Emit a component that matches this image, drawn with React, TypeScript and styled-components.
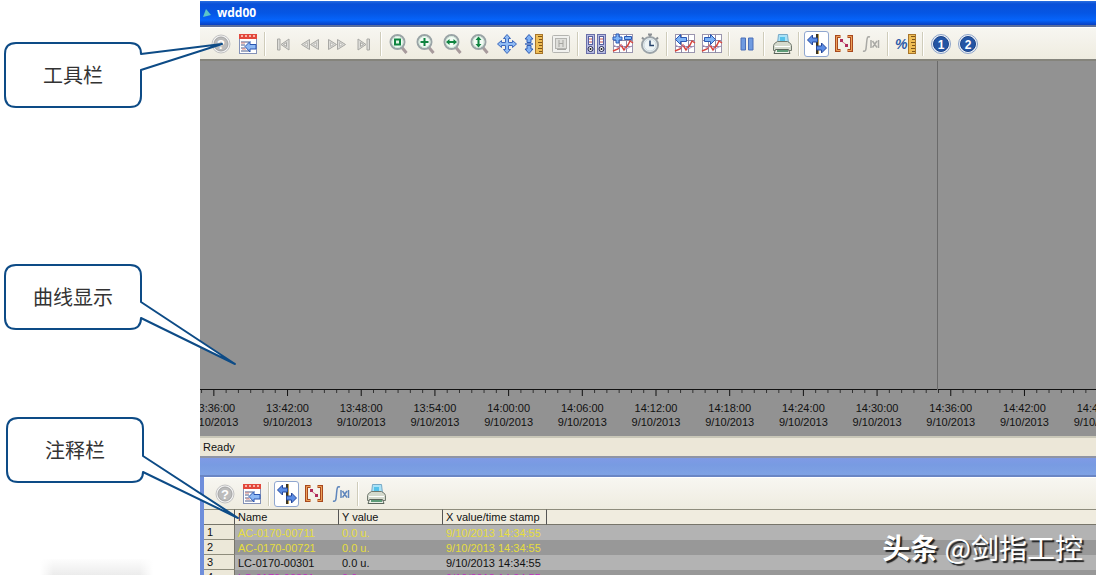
import React from "react";
import styled, { createGlobalStyle, css } from "styled-components";

const GlobalStyle = createGlobalStyle`
  *, *::before, *::after { box-sizing: border-box; }
  body {
    margin: 0;
    background: #fff;
    color: #111;
    font-family: "Liberation Sans", Arial, sans-serif;
    font-size: 11px;
    line-height: 14px;
  }
`;

/* ---------- page frame ---------- */

const Page = styled.div`
  position: relative;
  display: flex;
  min-height: 100vh;
  padding: 1px 6px 6px 0;
  overflow: hidden;
`;

const NotesColumn = styled.aside`
  flex: 0 0 200px;
  display: flex;
  align-items: flex-end;
  padding-left: 40px;
`;

const SoftPatch = styled.div`
  width: 113px;
  height: 16px;
  background: linear-gradient(90deg, #fff 0, transparent 12%, transparent 88%, #fff 100%),
    linear-gradient(#fdfdfd, #ececec);
`;

const AppWindow = styled.main`
  position: relative;
  flex: 1;
  min-width: 0;
  display: flex;
  flex-direction: column;
`;

const TitleBar = styled.header`
  flex: 0 0 26px;
  display: flex;
  align-items: center;
  gap: 6px;
  padding-left: 2px;
  border-bottom: 2px solid #5c6f9c;
  background: linear-gradient(#2a6fe0 0, #0a50d8 12%, #0556e4 50%, #0664fb 80%, #0a3fc0 100%);
`;

const Title = styled.h1`
  margin: 0;
  color: #fff;
  font: bold 12px/16px "Open Sans", sans-serif;
`;

const Toolbar = styled.div`
  flex: none;
  height: 32px;
  display: flex;
  align-items: center;
  padding-left: 7px;
  border-top: 1px solid #fff;
  background: linear-gradient(#f7f6f1, #efece0);
`;

const ToolButton = styled.button<{ $pressed?: boolean }>`
  flex: 0 0 25px;
  height: 26px;
  margin: 0 1px;
  padding: 0;
  display: flex;
  align-items: center;
  justify-content: center;
  border: 1px solid transparent;
  border-radius: 3px;
  background: none;
  ${(p) =>
    p.$pressed &&
    css`
      border-color: #8fa6cf;
      background: #fff;
    `}
  svg { flex: none; display: block; }
`;

const Separator = styled.span`
  flex: 0 0 8px;
  height: 24px;
  background: linear-gradient(90deg, transparent 3px, #cfccba 3px, #cfccba 4px, #fff 4px, #fff 5px, transparent 5px);
`;

/* ---------- trend area ---------- */

const Trend = styled.section`
  position: relative;
  flex: 1 0 300px;
  display: flex;
  flex-direction: column;
  overflow: hidden;
  border-top: 2px solid #85847c;
  background: #929292;
`;

const Plot = styled.div`
  flex: 1;
  border-bottom: 1px solid #111;
`;

const Cursor = styled.div`
  position: absolute;
  top: 0;
  bottom: 46px;
  right: 158px;
  width: 1px;
  background: #6a6a6a;
`;

const Axis = styled.div`
  margin: 0 -39px 0 -23px;
  height: 46px;
`;

const Ticks = styled.svg`
  display: block;
  width: 100%;
  height: 11px;
`;

const AxisLabels = styled.div`
  display: grid;
  grid-template-columns: repeat(13, 1fr);
  text-align: center;
  white-space: nowrap;
`;

const StatusBar = styled.footer`
  flex: 0 0 22px;
  padding: 0 3px;
  border-top: 2px solid #c9c7b8;
  border-bottom: 2px solid #8f94a4;
  background: #ece7d8;
  line-height: 18px;
`;

const PaneCaption = styled.div`
  flex: 0 0 19px;
  border-bottom: 2px solid #6a86c4;
  background: linear-gradient(#7f9ae6, #789be2 40%, #7fa2e4);
`;

const NotePane = styled.section`
  border-left: 4px solid #6f8edb;
`;

const TableView = styled.div`
  height: 66px;
  overflow: hidden;
`;

const Table = styled.table`
  width: 100%;
  table-layout: fixed;
  border-collapse: separate;
  border-spacing: 0;
  white-space: nowrap;
  th, td { height: 15px; padding: 0 0 0 3px; text-align: left; font-weight: normal; line-height: 14px; }
  thead th { height: 16px; border-top: 1px solid #8e8c7c; border-bottom: 1px solid #77756a; background: #f0ecdf; }
  thead th:not(:last-child) { border-right: 1px solid #555; }
  tbody th { border-right: 1px solid #77756a; border-bottom: 1px solid #8e8c7c; background: #ece8d9; }
`;

const Row = styled.tr<{ $ink: string }>`
  color: ${(p) => p.$ink};
  background: #b3b3b3;
  &:nth-child(even) { background: #989898; }
  th { color: #111; }
`;

const Col = styled.col<{ $w?: number }>`
  width: ${(p) => (p.$w ? p.$w + "px" : "auto")};
`;

const Watermark = styled.div`
  position: absolute;
  right: 13px;
  bottom: 8px;
  color: #fff;
  font: 28px/40px "Noto Sans CJK SC", sans-serif;
  text-shadow: 2px 2px 1px #222;
  white-space: nowrap;
  b { font-weight: 700; }
`;

/* ---------- callouts ---------- */

const CalloutBox = styled.div<{ $top: number; $left: number }>`
  position: absolute;
  top: ${(p) => p.$top}px;
  left: ${(p) => p.$left}px;
  width: 138px;
  height: 66px;
  display: flex;
  align-items: center;
  justify-content: center;
  color: #333;
  font: 20px/28px "Noto Sans CJK SC", sans-serif;
`;

const CalloutShape = styled.svg`
  position: absolute;
  inset: 0;
  overflow: visible;
`;

const CalloutText = styled.span`
  position: relative;
`;

type CalloutProps = { top: number; left: number; from: number; to: number; tip: [number, number]; children: string };

function Callout({ top, left, from, to, tip, children }: CalloutProps) {
  const d = `M12 1H126Q137 1 137 12V${from}L${tip[0]} ${tip[1]}L137 ${to}${to < 54 ? "V54" : ""}Q137 65 126 65H12Q1 65 1 54V12Q1 1 12 1Z`;
  return (
    <CalloutBox $top={top} $left={left}>
      <CalloutShape width="138" height="66" aria-hidden="true">
        <path d={d} fill="#fff" stroke="#0d4b86" strokeWidth="2" strokeLinejoin="round" />
      </CalloutShape>
      <CalloutText>{children}</CalloutText>
    </CalloutBox>
  );
}

/* ---------- icons ---------- */

const Icon = ({ children }: { children: React.ReactNode }) => (
  <svg width="22" height="22" viewBox="0 0 22 22" fill="none" aria-hidden="true">
    {children}
  </svg>
);

const HelpIcon = () => (
  <Icon>
    <circle cx="11" cy="11" r="9" fill="#f3f3f3" stroke="#c2c2c2" />
    <circle cx="11" cy="11" r="7" fill="#bcbcbc" stroke="#a4a4a4" />
    <text x="11" y="15.5" textAnchor="middle" fontSize="13" fontWeight="bold" fill="#fff">?</text>
  </Icon>
);

const ConfigIcon = () => (
  <Icon>
    <rect x="2.5" y="1.5" width="17" height="19" fill="#fff" stroke="#8492b8" />
    <path d="M2 1h18v5H2z" fill="#e2483c" />
    <path d="M4 3h2M8 3h2M12 3h2M16 3h2" stroke="#ffd8d0" strokeWidth="1.5" />
    <path d="M4 9h8M4 12h4M4 15h4M4 18h8" stroke="#4c5a88" />
    <path d="M4 10h4M5 16h4" stroke="#e08a80" />
    <path d="M8 13.5l5-5v3h6v4.500h-6v3z" fill="#8db8f4" stroke="#2a55b0" />
  </Icon>
);

const NavIcon = ({ kind }: { kind: "first" | "back" | "fwd" | "last" }) => {
  const flip = kind === "fwd" || kind === "last";
  return (
    <Icon>
      <g transform={flip ? "matrix(-1 0 0 1 22 0)" : undefined} fill="#dcdcd8" stroke="#a8a8a4">
        {kind === "first" || kind === "last" ? (
          <>
            <path d="M5.500 6h2.500v11H5.500z" />
            <path d="M17 6v11l-8-5.500z" />
            <path d="M14.500 9.500v4l-3-2z" fill="#f4f3ee" />
          </>
        ) : (
          <>
            <path d="M10.500 6.500v10l-8-5z" />
            <path d="M19.500 6.500v10l-8-5z" />
            <path d="M8.500 9.500v4l-3-2zM17.500 9.500v4l-3-2z" fill="#f4f3ee" stroke="#bcbcb8" />
          </>
        )}
      </g>
    </Icon>
  );
};

const ZoomIcon = ({ kind }: { kind: "area" | "in" | "x" | "y" }) => (
  <Icon>
    <path d="M13.500 14l5 6" stroke="#a79a9c" strokeWidth="3" />
    <circle cx="9.500" cy="9" r="7" fill="#f3fbf5" stroke="#9aa4a6" strokeWidth="2" />
    <circle cx="9.500" cy="9" r="5.500" stroke="#cfe6d8" />
    {kind === "area" && <rect x="7" y="6.500" width="5" height="5" fill="#e2f5e6" stroke="#0f8440" strokeWidth="2" />}
    {kind === "in" && <path d="M9.500 5v8M5.500 9h8" stroke="#0f8440" strokeWidth="2" />}
    {kind === "x" && <path d="M4 9l3.500-3v2h4V6L15 9l-3.500 3v-2h-4v2z" fill="#0f8440" />}
    {kind === "y" && <path d="M9.500 3.500l3 3.500h-2v4h2l-3 3.500-3-3.500h2V7h-2z" fill="#0f8440" />}
  </Icon>
);

const MoveIcon = () => (
  <Icon>
    <path
      d="M11 1.500l3.500 4H12.500v4h4V7.500l4 3.500-4 3.500v-2h-4v4h2L11 20.500l-3.500-4h2v-4h-4v2l-4-3.500 4-3.500v2h4v-4h-2z"
      fill="#8fbcf5"
      stroke="#3c68bc"
    />
  </Icon>
);

const Ruler = ({ x, y, h }: { x: number; y: number; h: number }) => (
  <>
    <rect x={x + 0.5} y={y + 0.5} width="7" height={h} fill="#efbd55" stroke="#a8752a" />
    {Array.from({ length: Math.floor(h / 3) }, (_, i) => (
      <path key={i} d={`M${x + (i % 2 ? 4 : 3)} ${y + 3 + i * 3 - 0.5}H${x + 7}`} stroke="#7e5518" />
    ))}
  </>
);

const ScaleYIcon = () => (
  <Icon>
    <path d="M6 1.500l4 4.500H8v3.500H4V6H2zM6 20.500L2 16h2v-3.500h4V16h2z" fill="#7fb0f3" stroke="#2f5cb4" />
    <path d="M2 11h8" stroke="#3c68bc" strokeWidth="1.500" />
    <Ruler x={12} y={1} h={19} />
  </Icon>
);

const OriginalIcon = () => (
  <Icon>
    <rect x="2.500" y="2.500" width="17" height="17" rx="1" fill="#f1f1ee" stroke="#b4b4b0" />
    <rect x="5.500" y="5.500" width="11" height="10" fill="#dededa" stroke="#b4b4b0" />
    <path d="M9 7v7M13 7v7M9 10.500h4M7 16.500h9" stroke="#a5a5a1" />
  </Icon>
);

const ArchiveIcon = () => (
  <Icon>
    {[1, 12].map((x) => (
      <g key={x}>
        <rect x={x + 0.5} y="1.500" width="8" height="19" fill="#b7bbe2" stroke="#6a6fa8" />
        <rect x={x + 2.5} y="3.500" width="4" height="8" fill="#fff" stroke="#5660a0" />
        <path d={`M${x + 3} 6h3M${x + 3} 9h3`} stroke="#c0504c" />
        <circle cx={x + 4.5} cy="16" r="2.500" fill="#fff" stroke="#20244c" />
        <circle cx={x + 4.5} cy="16" r="1" fill="#111" />
      </g>
    ))}
  </Icon>
);

const GridIcon = ({ kind }: { kind: "curves" | "left" | "right" }) => (
  <Icon>
    <rect x="1.500" y="1.500" width="19" height="18" fill="#fff" stroke="#9a95ae" />
    <path d="M7.500 2v18M14.500 2v18M2 7.500h18M2 13.500h18" stroke="#8d88a4" />
    <path d="M1 18l5-2 3-4 3 5 4-5 2-4 3 2" stroke="#d8443c" strokeWidth="1.500" />
    <path d="M2 12l4 3 4-3 4 4 6-3" stroke="#b49ac4" />
    {kind === "curves" && (
      <>
        <path d="M4 1h3v3h3v3H7v3H4V7H1V4h3z" fill="#7fb4f6" stroke="#2b58b4" />
        <path d="M12.500 3.500h7v3h-7z" fill="#7fb4f6" stroke="#2b58b4" />
      </>
    )}
    {kind === "left" && <path d="M1.500 6.500l5-5v3h6v4h-6v3z" fill="#7fb4f6" stroke="#2b58b4" />}
    {kind === "right" && <path d="M14.500 6.500l-5-5v3h-6v4h6v3z" fill="#7fb4f6" stroke="#2b58b4" />}
  </Icon>
);

const TimerIcon = () => (
  <Icon>
    <path d="M9 1.500h4M11 2v3M3 4.500l2 2M19 4.500l-2 2" stroke="#8c9094" strokeWidth="2" />
    <circle cx="11" cy="12" r="8" fill="#eef4f6" stroke="#9ba3a8" strokeWidth="2" />
    <circle cx="11" cy="12" r="6" stroke="#cdd9de" />
    <path d="M11 7.500v5h4" stroke="#26436c" strokeWidth="1.500" />
  </Icon>
);

const PauseIcon = () => (
  <Icon>
    <path d="M5 5h4.500v12H5zM12.500 5H17v12h-4.500z" fill="#6f9be0" stroke="#4a6fb8" />
  </Icon>
);

const PrintIcon = () => (
  <Icon>
    <path d="M6.500 10.500l1-9h9l1 9z" fill="#a9e2f7" stroke="#78a9c6" />
    <path d="M9 4h5v4H9z" fill="#55c2ea" />
    <path d="M3.500 10.500l3-2h10l3 2 1 2v5h-18v-5z" fill="#d5dacd" stroke="#727a70" />
    <path d="M4 13.500h15" stroke="#fff" />
    <path d="M4.500 16.500h13l1.500 4H3z" fill="#eaf0e6" stroke="#5c665c" />
    <path d="M6 18h11" stroke="#2f7f52" strokeWidth="1.500" />
  </Icon>
);

const RulerToolIcon = () => (
  <Icon>
    <path d="M11 1v20" stroke="#3a3320" strokeWidth="2" />
    <path d="M12.500 1v20" stroke="#c2a25a" />
    <path d="M1.500 7l5-5v3h5v4h-5v3z" fill="#5a8ce4" stroke="#23479c" />
    <path d="M20.500 15l-5-5v3h-5v4h5v3z" fill="#5a8ce4" stroke="#23479c" />
  </Icon>
);

const RangeIcon = () => (
  <Icon>
    <path d="M7.500 3.500h-4v14h4M14.500 3.500h4v14h-4" stroke="#a8481e" strokeWidth="3" />
    <path d="M7.500 3.500h-4v14h4M14.500 3.500h4v14h-4" stroke="#eda25a" />
    <path d="M7 7l8 6" stroke="#d8708c" />
    <path d="M7 6h3v3H7zM12 11h3v3h-3z" fill="#b02a5c" />
  </Icon>
);

const FormulaIcon = ({ active }: { active?: boolean }) => (
  <Icon>
    <path
      d="M3 18c3 1 3-1 3.500-7S7 3 10 4M11 7v8M18.500 7v8M12.500 8l4.500 6.500M17 8l-4.500 6.500"
      stroke={active ? "#5f86bc" : "#a9a9a5"}
      strokeWidth="1.500"
    />
  </Icon>
);

const PercentIcon = () => (
  <Icon>
    <text x="0" y="16" fontSize="14" fontStyle="italic" fontWeight="bold" fill="#2c5aa8">%</text>
    <Ruler x={13} y={1} h={19} />
  </Icon>
);

const NumberIcon = ({ n }: { n: number }) => (
  <Icon>
    <circle cx="11" cy="11" r="9.500" fill="#e9eef6" stroke="#8ba2c8" />
    <circle cx="11" cy="11" r="7.500" fill="#2455a4" stroke="#1b4388" />
    <text x="11" y="15.5" textAnchor="middle" fontSize="12" fontWeight="bold" fill="#fff">{n}</text>
  </Icon>
);

/* ---------- toolbars ---------- */

type Tool = { label: string; icon: React.ReactNode; pressed?: boolean };

const help: Tool = { label: "Help", icon: <HelpIcon /> };
const config: Tool = { label: "Configuration", icon: <ConfigIcon /> };
const ruler: Tool = { label: "Ruler", icon: <RulerToolIcon />, pressed: true };
const range: Tool = { label: "Statistics range", icon: <RangeIcon /> };
const print: Tool = { label: "Print", icon: <PrintIcon /> };

const trendTools: Tool[][] = [
  [help, config],
  [
    { label: "First record", icon: <NavIcon kind="first" /> },
    { label: "Previous record", icon: <NavIcon kind="back" /> },
    { label: "Next record", icon: <NavIcon kind="fwd" /> },
    { label: "Last record", icon: <NavIcon kind="last" /> },
  ],
  [
    { label: "Zoom area", icon: <ZoomIcon kind="area" /> },
    { label: "Zoom in", icon: <ZoomIcon kind="in" /> },
    { label: "Zoom time axis", icon: <ZoomIcon kind="x" /> },
    { label: "Zoom value axis", icon: <ZoomIcon kind="y" /> },
    { label: "Move trend area", icon: <MoveIcon /> },
    { label: "Move axes area", icon: <ScaleYIcon /> },
    { label: "Original view", icon: <OriginalIcon /> },
  ],
  [
    { label: "Select data connection", icon: <ArchiveIcon /> },
    { label: "Select trends", icon: <GridIcon kind="curves" /> },
    { label: "Select time range", icon: <TimerIcon /> },
  ],
  [
    { label: "Previous trend", icon: <GridIcon kind="left" /> },
    { label: "Next trend", icon: <GridIcon kind="right" /> },
  ],
  [{ label: "Stop", icon: <PauseIcon /> }],
  [print],
  [ruler, range, { label: "Statistics", icon: <FormulaIcon /> }],
  [{ label: "Relative axis", icon: <PercentIcon /> }],
  [
    { label: "User function 1", icon: <NumberIcon n={1} /> },
    { label: "User function 2", icon: <NumberIcon n={2} /> },
  ],
];

const noteTools: Tool[][] = [
  [help, config],
  [ruler, range, { label: "Statistics", icon: <FormulaIcon active /> }],
  [print],
];

function ToolStrip({ groups, label }: { groups: Tool[][]; label: string }) {
  return (
    <Toolbar role="toolbar" aria-label={label}>
      {groups.map((group, i) => (
        <React.Fragment key={i}>
          {i > 0 && <Separator />}
          {group.map((t) => (
            <ToolButton key={t.label} type="button" aria-label={t.label} $pressed={t.pressed}>
              {t.icon}
            </ToolButton>
          ))}
        </React.Fragment>
      ))}
    </Toolbar>
  );
}

/* ---------- data ---------- */

const times = [
  "13:36:00", "13:42:00", "13:48:00", "13:54:00", "14:00:00", "14:06:00", "14:12:00",
  "14:18:00", "14:24:00", "14:30:00", "14:36:00", "14:42:00", "14:48:00",
];

const rows = [
  { name: "AC-0170-00711", ink: "#e6de3c" },
  { name: "AC-0170-00721", ink: "#e6de3c" },
  { name: "LC-0170-00301", ink: "#111" },
  { name: "LC-0170-00321", ink: "#c030c0" },
];

export default function App() {
  return (
    <Page>
      <GlobalStyle />
      <NotesColumn>
        <SoftPatch />
      </NotesColumn>
      <AppWindow>
        <TitleBar>
          <svg width="9" height="9" viewBox="0 0 9 9" aria-hidden="true">
            <path d="M4 0l5 6-8 2z" fill="#5cc4c8" />
          </svg>
          <Title>wdd00</Title>
        </TitleBar>
        <ToolStrip groups={trendTools} label="Trend" />
        <Trend>
          <Plot />
          <Cursor />
          <Axis>
            <Ticks aria-hidden="true">
              {Array.from({ length: 78 }, (_, i) => {
                const x = `${(i / 78) * 100}%`;
                const major = i % 6 === 3;
                return (
                  <line key={i} x1={x} x2={x} y1="0" y2={major ? 6 : 3} stroke={major ? "#111" : "#333"} />
                );
              })}
            </Ticks>
            <AxisLabels>
              {times.map((t) => (
                <div key={t}>
                  {t}
                  <br />
                  9/10/2013
                </div>
              ))}
            </AxisLabels>
          </Axis>
        </Trend>
        <StatusBar>Ready</StatusBar>
        <PaneCaption />
        <NotePane>
          <ToolStrip groups={noteTools} label="Ruler" />
          <TableView>
            <Table>
              <colgroup>
                <Col $w={31} />
                <Col $w={104} />
                <Col $w={104} />
                <Col $w={104} />
                <Col />
              </colgroup>
              <thead>
                <tr>
                  <th />
                  <th scope="col">Name</th>
                  <th scope="col">Y value</th>
                  <th scope="col">X value/time stamp</th>
                  <th />
                </tr>
              </thead>
              <tbody>
                {rows.map((r, i) => (
                  <Row key={r.name} $ink={r.ink}>
                    <th scope="row">{i + 1}</th>
                    <td>{r.name}</td>
                    <td>0.0 u.</td>
                    <td>9/10/2013 14:34:55</td>
                    <td />
                  </Row>
                ))}
              </tbody>
            </Table>
          </TableView>
        </NotePane>
        <Watermark>
          <b>头条</b> @剑指工控
        </Watermark>
      </AppWindow>
      <Callout top={42} left={4} from={12} to={28} tip={[218, 2]}>工具栏</Callout>
      <Callout top={264} left={4} from={38} to={54} tip={[231, 100]}>曲线显示</Callout>
      <Callout top={417} left={6} from={39} to={55} tip={[232, 101]}>注释栏</Callout>
    </Page>
  );
}
